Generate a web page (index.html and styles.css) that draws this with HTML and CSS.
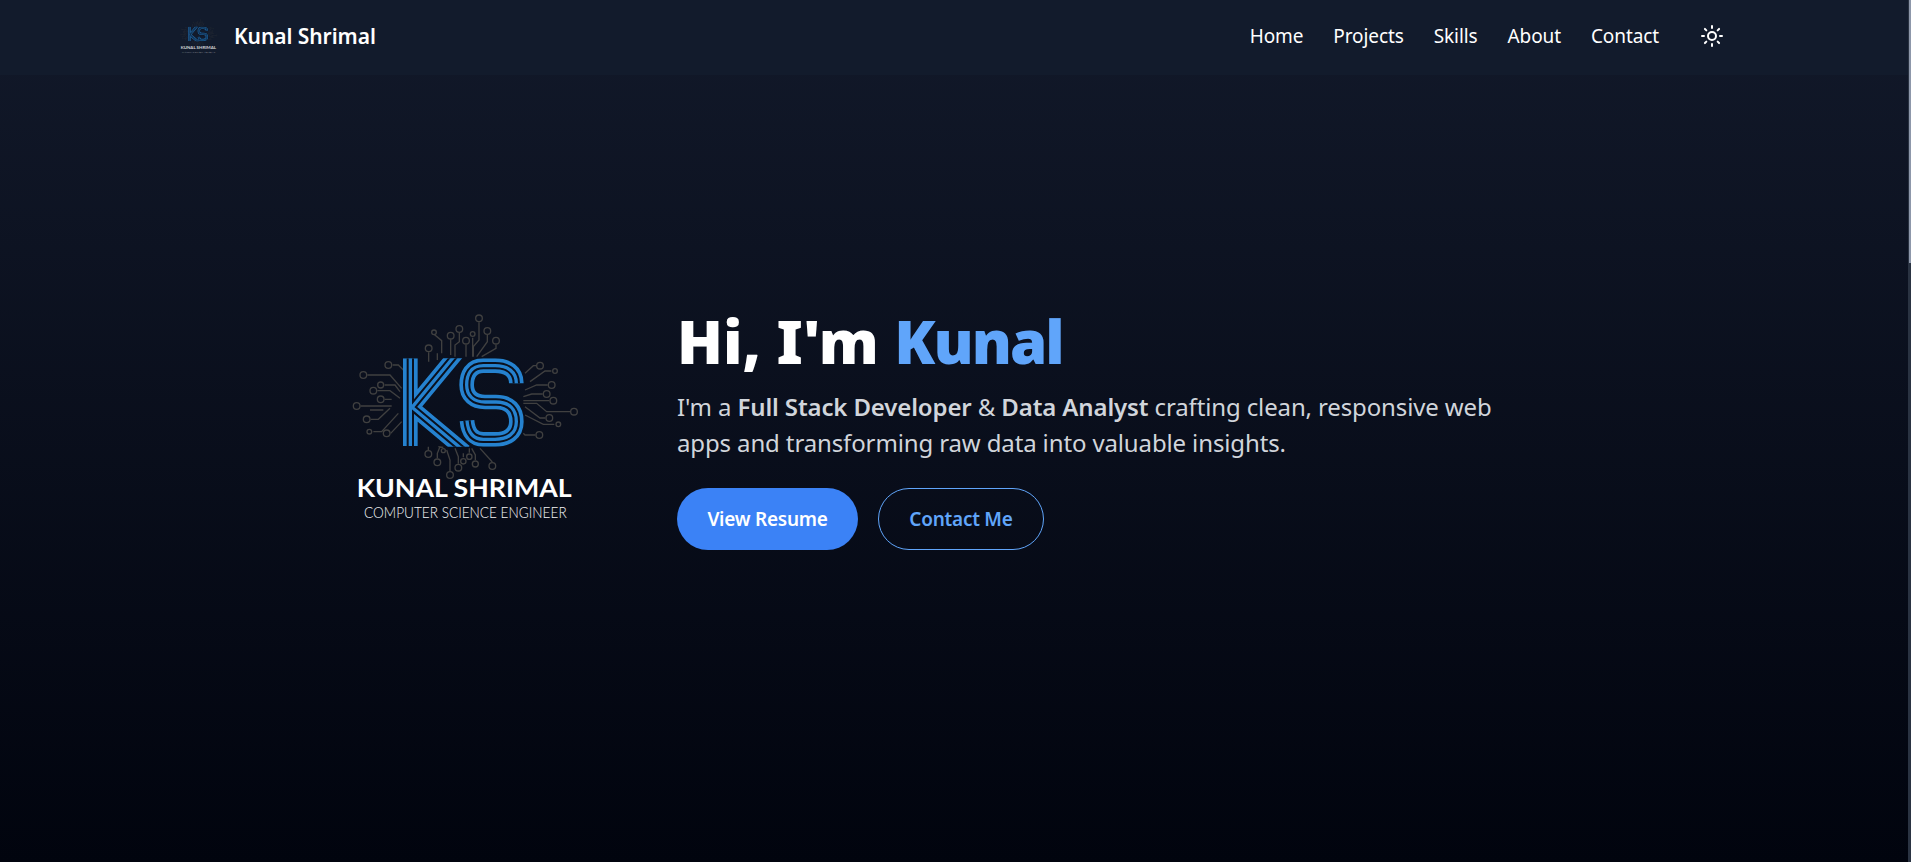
FILE: index.html
```html
<!DOCTYPE html>
<html lang="en">
<head>
<meta charset="utf-8">
<title>Kunal Shrimal</title>
<link rel="stylesheet" href="styles.css">
</head>
<body>
<svg class="defs" width="0" height="0" aria-hidden="true">
  <defs>
    <clipPath id="ks-clip"><rect x="150" y="175" width="440" height="265"/></clipPath>
    <path id="k-shape" d="M211 175V438M216 322L350 160M216 322L375 455"/>
    <path id="s-shape" d="M529 250C529 215 503 197 465 197H430C392 197 380 225 380 255C380 288 402 306 435 306H468C510 306 529 330 529 365C529 400 503 418 465 418H430C400 418 384 398 381 362"/>
    <symbol id="ks-mark" viewBox="0 0 750 690">
      <g class="traces">
        <path d="M417 67V120L400 140V170M282 103L305 122V160M332 118V165M358 98V125L345 135V170M398 113V170M378 134V170M442 105V125L410 170M468 134V145L425 170M266 157V185M292 160V180"/>
        <path d="M158 195H175L190 210M82 225H150L185 265M134 255H165L180 275M112 272H150L180 295M134 298H155M62 318H155M90 330H130M92 358H115L150 325M100 395H125L175 340M152 400L185 365"/>
        <path d="M634 213H615L570 245M588 197H580L555 220M623 255H590L555 270M608 282H575L550 290M628 302H550M690 335H620L590 310L550 310M616 354H600L555 320M643 373H610L555 345M586 405H555L550 400"/>
        <path d="M265 450V440M310 442L295 440M292 475V460L300 440M355 491V470L345 445M388 458V445M406 480V465L395 445M370 472V460M457 486L420 445M330 513V480L320 450"/>
        <circle cx="417" cy="55" r="10"/><circle cx="282" cy="97" r="7"/><circle cx="332" cy="107" r="10"/><circle cx="358" cy="87" r="10"/><circle cx="398" cy="102" r="7"/><circle cx="378" cy="122" r="10"/><circle cx="442" cy="93" r="10"/><circle cx="468" cy="122" r="10"/><circle cx="266" cy="145" r="10"/>
        <circle cx="145" cy="195" r="10"/><circle cx="70" cy="225" r="10"/><circle cx="122" cy="255" r="9"/><circle cx="100" cy="272" r="10"/><circle cx="122" cy="298" r="10"/><circle cx="50" cy="318" r="10"/><circle cx="80" cy="358" r="10"/><circle cx="88" cy="395" r="7"/><circle cx="140" cy="400" r="10"/>
        <circle cx="645" cy="213" r="7"/><circle cx="600" cy="197" r="10"/><circle cx="635" cy="255" r="10"/><circle cx="620" cy="282" r="10"/><circle cx="640" cy="302" r="10"/><circle cx="702" cy="335" r="10"/><circle cx="628" cy="354" r="10"/><circle cx="655" cy="373" r="7"/><circle cx="598" cy="405" r="10"/>
        <circle cx="265" cy="462" r="10"/><circle cx="310" cy="452" r="6"/><circle cx="292" cy="487" r="10"/><circle cx="355" cy="503" r="10"/><circle cx="388" cy="470" r="8"/><circle cx="406" cy="492" r="9"/><circle cx="370" cy="484" r="8"/><circle cx="457" cy="498" r="10"/><circle cx="330" cy="525" r="10"/>
      </g>
      <g clip-path="url(#ks-clip)">
        <use href="#k-shape" class="ks ks-outer"/>
        <use href="#k-shape" class="ks ks-gap"/>
        <use href="#k-shape" class="ks ks-core"/>
        <use href="#s-shape" class="ks ks-halo"/>
        <use href="#s-shape" class="ks ks-outer"/>
        <use href="#s-shape" class="ks ks-gap"/>
        <use href="#s-shape" class="ks ks-core"/>
      </g>
      <text class="mark-name" x="50" y="592" textLength="645" lengthAdjust="spacingAndGlyphs">KUNAL SHRIMAL</text>
      <text class="mark-role" x="72" y="655" textLength="608" lengthAdjust="spacingAndGlyphs">COMPUTER SCIENCE ENGINEER</text>
    </symbol>
  </defs>
</svg>
<div class="page">
  <div class="viewport">
    <header class="navbar">
      <div class="nav-inner">
        <a class="brand" href="#">
          <svg class="brand-logo" aria-hidden="true"><use href="#ks-mark"/></svg>
          <span class="brand-name">Kunal Shrimal</span>
        </a>
        <nav class="nav-links">
          <a href="#">Home</a>
          <a href="#">Projects</a>
          <a href="#">Skills</a>
          <a href="#">About</a>
          <a href="#">Contact</a>
          <button class="theme-toggle" type="button" aria-label="Toggle theme">
            <svg viewBox="0 0 24 24" width="24" height="24" fill="none" stroke="currentColor" stroke-width="2" stroke-linecap="round" stroke-linejoin="round">
              <circle cx="12" cy="12" r="4"/>
              <path d="M12 2v2M12 20v2M4.93 4.93l1.41 1.41M17.66 17.66l1.41 1.41M2 12h2M20 12h2M6.34 17.66l-1.41 1.41M19.07 4.93l-1.41 1.41"/>
            </svg>
          </button>
        </nav>
      </div>
    </header>
    <main class="hero">
      <svg class="hero-logo" role="img" aria-label="KS logo"><use href="#ks-mark"/></svg>
      <section class="hero-copy">
        <h1>Hi, I'm <span class="accent">Kunal</span></h1>
        <p>I'm a <strong>Full Stack Developer</strong> &amp; <strong>Data Analyst</strong> crafting clean, responsive web apps and transforming raw data into valuable insights.</p>
        <div class="actions">
          <a class="btn btn-primary" href="#">View Resume</a>
          <a class="btn btn-outline" href="#">Contact Me</a>
        </div>
      </section>
    </main>
  </div>
  <div class="scrollbar"><div class="scrollbar-thumb"></div></div>
</div>
</body>
</html>
```

FILE: styles.css
```css
* { box-sizing: border-box; }
html, body { margin: 0; height: 100%; }
body {
  background: #000;
  color: #fff;
  font-family: "Noto Sans", "Open Sans", sans-serif;
  overflow: hidden;
}
a { color: inherit; text-decoration: none; }
.defs { position: absolute; }

.page { display: flex; height: 862px; }
.viewport {
  flex: 1;
  display: flex;
  flex-direction: column;
  background: linear-gradient(180deg, #12192a 0%, #01040e 100%);
}
.scrollbar { width: 3px; padding-left: 1px; background: #2a3342; }
.scrollbar-thumb { height: 263px; background: #8d97aa; }

.navbar { height: 75px; background: #121b2c; flex: none; }
.nav-inner {
  height: 100%;
  padding: 0 184px 3px 178px;
  display: flex;
  align-items: center;
  justify-content: space-between;
}
.brand { display: flex; align-items: center; gap: 15px; }
.brand-logo { width: 41px; height: 38px; opacity: .8; }
.brand-name { font-size: 21px; font-weight: 600; letter-spacing: -0.05px; }
.nav-links { display: flex; align-items: center; gap: 30px; font-size: 19px; letter-spacing: -0.1px; }
.theme-toggle {
  margin-left: 11px;
  padding: 0;
  background: none;
  border: 0;
  color: #fff;
  display: flex;
}

.hero {
  flex: 1;
  display: flex;
  align-items: flex-start;
  gap: 87px;
  padding: 225px 0 0 340px;
}
.hero-logo { width: 250px; height: 230px; flex: none; }
.hero-copy { margin-top: 5px; }
h1 {
  margin: 0;
  font-size: 60px;
  line-height: 72px;
  font-weight: 900;
}
.accent { color: #60a5fa; letter-spacing: -2px; }
.hero-copy p {
  width: 840px;
  margin: 12px 0 0;
  font-size: 24px;
  line-height: 36px;
  color: #d1d5db;
  letter-spacing: -0.13px;
}
.hero-copy strong { font-weight: 600; }
.actions { display: flex; gap: 20px; margin-top: 27px; }
.btn {
  height: 62px;
  display: flex;
  align-items: center;
  justify-content: center;
  border-radius: 31px;
  font-size: 19px;
  font-weight: 600;
  letter-spacing: -0.25px;
}
.btn-primary { width: 181px; background: #3b82f6; color: #fff; }
.btn-outline { width: 166px; border: 1px solid #60a5fa; color: #60a5fa; }

.traces { fill: none; stroke: #404040; stroke-width: 4; }
.ks { fill: none; stroke-linejoin: miter; }
.ks-halo { stroke: #0a101d; stroke-width: 54; }
.ks-outer { stroke: #2582cf; stroke-width: 44; }
.ks-gap { stroke: #0a101d; stroke-width: 22; }
.ks-core { stroke: #2582cf; stroke-width: 10; }
.mark-name { fill: #fff; font-family: Lato, sans-serif; font-weight: 700; font-size: 72px; }
.mark-role { fill: #f3f4f6; font-family: Lato, sans-serif; font-weight: 300; font-size: 46px; }
```
